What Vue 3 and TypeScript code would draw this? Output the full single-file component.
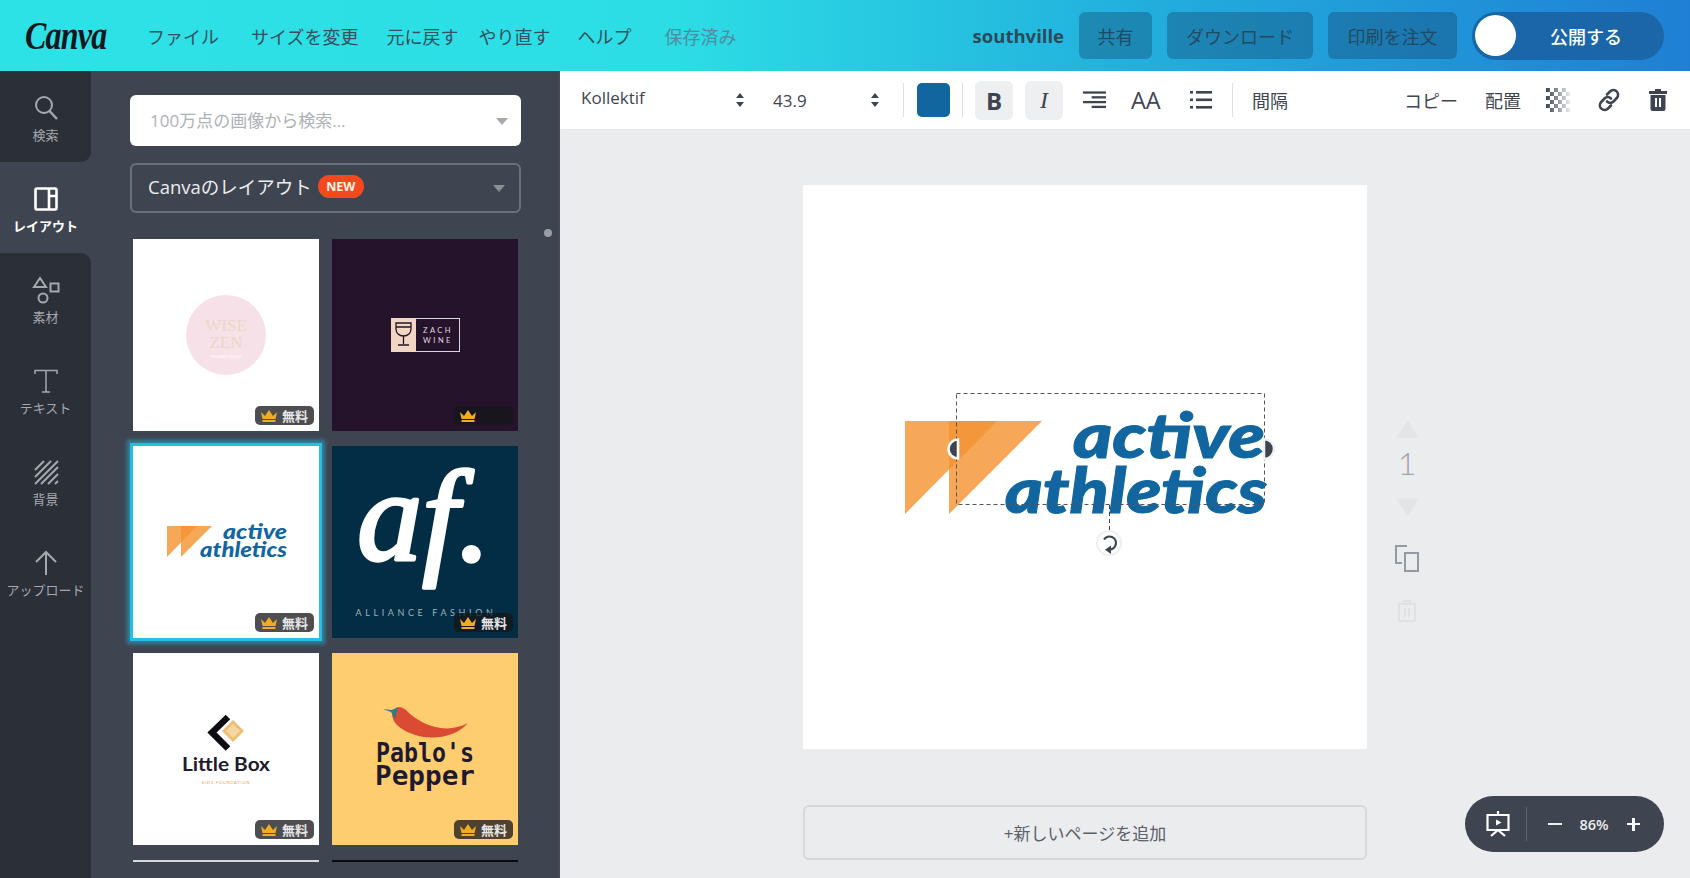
<script setup lang="ts">
const menu = ['ファイル', 'サイズを変更', '元に戻す', 'やり直す', 'ヘルプ']
const railTabs = [
  { id: 'search', label: '検索' },
  { id: 'layout', label: 'レイアウト' },
  { id: 'shapes', label: '素材' },
  { id: 'text', label: 'テキスト' },
  { id: 'bg', label: '背景' },
  { id: 'upload', label: 'アップロード' },
]
const thumbs = [
  { id: 'wise', label: true },
  { id: 'zach', label: false },
  { id: 'active', label: true },
  { id: 'af', label: true },
  { id: 'box', label: true },
  { id: 'pablo', label: true },
]
</script>

<template>
  <div class="app">
    <header class="topbar">
      <span class="logo">Canva</span>
      <nav class="menu">
        <span v-for="item in menu" :key="item" class="menu-item">{{ item }}</span>
        <span class="saved">保存済み</span>
      </nav>
      <div class="top-right">
        <span class="user">southville</span>
        <button class="top-btn share">共有</button>
        <button class="top-btn download">ダウンロード</button>
        <button class="top-btn print">印刷を注文</button>
        <button class="publish"><i class="knob"></i><span>公開する</span></button>
      </div>
    </header>

    <div class="body">
      <aside class="rail">
        <div
          v-for="tab in railTabs"
          :key="tab.id"
          class="rail-tab"
          :class="['tab-' + tab.id, { current: tab.id === 'layout' }]"
        >
          <svg class="rail-icon" viewBox="0 0 30 30" fill="none" stroke="currentColor" stroke-width="2">
            <template v-if="tab.id === 'search'">
              <circle cx="13" cy="12" r="8" />
              <path d="M18.500 18 26 26" stroke-width="2.500" />
            </template>
            <template v-else-if="tab.id === 'layout'">
              <rect x="4.500" y="4.500" width="21" height="21" rx="1.500" stroke-width="2.600" />
              <path d="M18 5v20M18 12h7" stroke-width="2.600" />
            </template>
            <template v-else-if="tab.id === 'shapes'">
              <path d="M9 3 15 12H3Z" />
              <rect x="19.500" y="8.500" width="8" height="8" />
              <circle cx="12" cy="23" r="4.500" />
            </template>
            <template v-else-if="tab.id === 'text'">
              <path d="M4 8V4.500h22V8M15 4.500V26M11 26h8" stroke-width="1.500" />
            </template>
            <template v-else-if="tab.id === 'bg'">
              <path d="M4 13 13 4M4 20 20 4M4 27 27 4M10 27 27 10M17 27 27 17M24 27l3-3" stroke-width="2" />
            </template>
            <template v-else>
              <path d="M15 27V5M5 14 15 4l10 10" />
            </template>
          </svg>
          <span class="rail-label">{{ tab.label }}</span>
        </div>
        <div class="rail-rest"></div>
      </aside>

      <section class="panel">
        <div class="search-box">
          <span>100万点の画像から検索...</span>
          <i class="caret"></i>
        </div>
        <div class="select-box">
          <span>Canvaのレイアウト</span>
          <b class="new">NEW</b>
          <i class="caret"></i>
        </div>
        <div class="grid">
          <div v-for="t in thumbs" :key="t.id" class="thumb" :class="'t-' + t.id">
            <svg class="art" viewBox="0 0 186 192">
              <template v-if="t.id === 'wise'">
                <circle cx="93" cy="96" r="40" fill="#f6e1e8" />
                <text x="93" y="92" class="serif" font-size="17" fill="#edd6c6">WISE</text>
                <text x="93" y="109" class="serif" font-size="17" fill="#edd6c6">ZEN</text>
                <text x="93" y="119" class="sans" font-size="3.500" fill="#fff">WELLNESS STUDIO</text>
              </template>
              <template v-else-if="t.id === 'zach'">
                <rect x="59.500" y="79.500" width="68" height="33" fill="#25132b" stroke="#d9d6d8" />
                <rect x="59" y="79" width="25" height="34" fill="#f1d6c3" />
                <g fill="none" stroke="#25132b" stroke-width="1.300">
                  <path d="M64 84h15v6c0 4-3 7-7.500 7S64 94 64 90ZM64 88h15M71.500 97v8M66 106h11" />
                </g>
                <text x="106" y="94" class="sans" font-size="7.500" letter-spacing="2.500" fill="#e3dde0">ZACH</text>
                <text x="106" y="104" class="sans" font-size="7.500" letter-spacing="2.500" fill="#e3dde0">WINE</text>
              </template>
              <template v-else-if="t.id === 'active'">
                <path d="M34 80h30L34 111Z" fill="#f6a858" />
                <path d="M48 80h31L48 111Z" fill="#f6a858" />
                <path d="M48 80h16L48 96.500Z" fill="#f4973a" />
                <text x="90" y="93" class="brand" font-size="21" textLength="64" lengthAdjust="spacingAndGlyphs">active</text>
                <text x="67" y="111" class="brand" font-size="21" textLength="87" lengthAdjust="spacingAndGlyphs">athletics</text>
              </template>
              <template v-else-if="t.id === 'af'">
                <text x="92" y="114" class="script" font-size="130" fill="#fff" stroke="#fff" stroke-width="3.500" stroke-linejoin="round">af.</text>
                <text x="94" y="170" class="sans" font-size="9" letter-spacing="3.600" fill="#9fb2bc">ALLIANCE FASHION</text>
              </template>
              <template v-else-if="t.id === 'box'">
                <path d="M95 64 79 79.500l16 16" fill="none" stroke="#0d0c12" stroke-width="6.500" />
                <path d="M100 67 111 78 100 89 89 78Z" fill="#eebe72" />
                <path d="M100 71 107 78 100 85 93 78Z" fill="#f4d7a2" />
                <text x="93" y="118" class="box-name" font-size="19" textLength="88" lengthAdjust="spacingAndGlyphs">Little Box</text>
                <text x="93" y="131" class="sans" font-size="4" letter-spacing=".8" fill="#e89b55">KIDS FOUNDATION</text>
              </template>
              <template v-else>
                <path d="M60 60C64 53 68 52 74 57C86 70 112 83 136 70C122 86 96 88 78 80C68 76 60 70 60 60Z" fill="#db4a32" />
                <path d="M51 56 60 57 66 54 63 66 59 59Z" fill="#2f7a8f" />
                <text x="93" y="109" class="pablo-name" font-size="26" textLength="98" lengthAdjust="spacingAndGlyphs">Pablo's</text>
                <text x="93" y="132" class="pablo-name" font-size="26" textLength="100" lengthAdjust="spacingAndGlyphs">Pepper</text>
              </template>
            </svg>
            <div class="badge">
              <svg class="crown" viewBox="0 0 18 14">
                <path d="M1 3 5 7 9 1l4 6 4-4-1.500 7h-13Z" fill="#f0ad21" />
                <rect x="2.500" y="11" width="13" height="2" fill="#f0ad21" />
              </svg>
              <span v-if="t.label">無料</span>
            </div>
          </div>
          <div class="next-row light"></div>
          <div class="next-row dark"></div>
        </div>
        <i class="scroll-dot"></i>
      </section>

      <main class="workspace">
        <div class="toolbar">
          <span class="font-name">Kollektif</span>
          <svg class="spin font-spin" viewBox="0 0 8 14"><path d="M4 0 8 5H0ZM4 14 0 9h8Z" /></svg>
          <span class="font-size">43.9</span>
          <svg class="spin size-spin" viewBox="0 0 8 14"><path d="M4 0 8 5H0ZM4 14 0 9h8Z" /></svg>
          <i class="sep sep-a"></i>
          <i class="swatch"></i>
          <i class="sep sep-b"></i>
          <span class="tool-toggle bold">B</span>
          <span class="tool-toggle italic">I</span>
          <svg class="tool-icon align" viewBox="0 0 24 20" fill="#3f4550">
            <rect x="0" y="1" width="24" height="2.400" />
            <rect x="9" y="6" width="15" height="2.400" />
            <rect x="0" y="11" width="24" height="2.400" />
            <rect x="9" y="16" width="15" height="2.400" />
          </svg>
          <span class="aa">AA</span>
          <svg class="tool-icon list" viewBox="0 0 22 20" fill="#3f4550">
            <rect x="0" y="1" width="3" height="2.600" />
            <rect x="6" y="1" width="16" height="2.600" />
            <rect x="0" y="8.500" width="3" height="2.600" />
            <rect x="6" y="8.500" width="16" height="2.600" />
            <rect x="0" y="16" width="3" height="2.600" />
            <rect x="6" y="16" width="16" height="2.600" />
          </svg>
          <i class="sep sep-c"></i>
          <span class="tool-text spacing">間隔</span>
          <div class="tool-right">
            <span class="tool-text">コピー</span>
            <span class="tool-text place">配置</span>
            <svg class="checker" viewBox="0 0 24 24">
              <defs>
                <linearGradient id="fade" x1="0" x2="1" y1="0" y2="0">
                  <stop offset="0" stop-color="#3f4550" />
                  <stop offset="1" stop-color="#3f4550" stop-opacity=".1" />
                </linearGradient>
              </defs>
              <path
                fill="url(#fade)"
                d="M0 0h4v4H0ZM8 0h4v4H8ZM16 0h4v4h-4ZM4 4h4v4H4ZM12 4h4v4h-4ZM20 4h4v4h-4ZM0 8h4v4H0ZM8 8h4v4H8ZM16 8h4v4h-4ZM4 12h4v4H4ZM12 12h4v4h-4ZM20 12h4v4h-4ZM0 16h4v4H0ZM8 16h4v4H8ZM16 16h4v4h-4ZM4 20h4v4H4ZM12 20h4v4h-4ZM20 20h4v4h-4Z"
              />
            </svg>
            <svg class="link" viewBox="0 0 24 24" fill="none" stroke="#3f4550" stroke-width="2.600" stroke-linecap="round">
              <path d="M10 6.500 13 3.500a4.600 4.600 0 0 1 6.800 6.500L16.500 13.500a4.600 4.600 0 0 1-6.500 0" />
              <path d="M14 17.500 11 20.500a4.600 4.600 0 0 1-6.800-6.500L7.500 10.500a4.600 4.600 0 0 1 6.500 0" />
            </svg>
            <svg class="trash" viewBox="0 0 18 22">
              <path fill="#3f4550" fill-rule="evenodd" d="M6 0h6v2h6v3H0V2h6ZM1.500 6h15v14a2 2 0 0 1-2 2h-11a2 2 0 0 1-2-2ZM6 9v9h2V9Zm4 0v9h2V9Z" />
            </svg>
          </div>
        </div>

        <div class="stage">
          <div class="canvas-row">
            <div class="canvas">
              <svg class="art" viewBox="0 0 564 564">
                <path d="M102 236h92l-92 93Z" fill="#f6a858" />
                <path d="M146 236h93l-93 93Z" fill="#f6a858" />
                <path d="M146 236h48l-48 49Z" fill="#f4973a" />
                <text x="270" y="273" class="brand" font-size="63" textLength="192" lengthAdjust="spacingAndGlyphs" stroke="#12669f" stroke-width="1">active</text>
                <text x="202" y="328" class="brand" font-size="63" textLength="262" lengthAdjust="spacingAndGlyphs" stroke="#12669f" stroke-width="1">athletics</text>
                <rect x="153.500" y="208.500" width="308" height="111" fill="none" stroke="#50555f" stroke-dasharray="4 3" />
                <path d="M155 254.500a9.500 9.500 0 0 0 0 19Z" fill="#3f4550" stroke="#fff" stroke-width="2.500" />
                <path d="M461 254a10 10 0 0 1 0 20Z" fill="#3f4550" stroke="#f1f2f3" stroke-width="2.500" />
                <path d="M306.500 320v28" stroke="#3f4550" stroke-dasharray="4 3" />
                <circle cx="306" cy="358" r="12" fill="#fff" stroke="#eeeff1" stroke-width="2" />
                <path d="M301 354.500a6.500 6.500 0 1 1 5 10" fill="none" stroke="#3f4550" stroke-width="2.200" />
                <path d="M308 360.500v8.500l-6-4.200Z" fill="#3f4550" />
              </svg>
            </div>
            <div class="page-tools">
              <svg class="tri" viewBox="0 0 24 18"><path d="M12 0 24 18H0Z" /></svg>
              <span class="page-num">1</span>
              <svg class="tri" viewBox="0 0 24 18"><path d="M0 0h24L12 18Z" /></svg>
              <svg class="dup" viewBox="0 0 24 27" fill="none" stroke="#959aa2" stroke-width="2">
                <path d="M12 1H1v17h6" />
                <rect x="10" y="8" width="13" height="18" />
              </svg>
              <svg class="bin" viewBox="0 0 18 22" fill="none" stroke="#dcdee1" stroke-width="1.500">
                <path d="M6 3V1h6v2M1 4h16v17H1ZM7 8v9M11 8v9" />
              </svg>
            </div>
          </div>
          <div class="add-page">+新しいページを追加</div>
        </div>

        <div class="zoom-pill">
          <svg class="present" viewBox="0 0 24 26" fill="none" stroke="#fff" stroke-width="2.200">
            <path d="M1.500 4h21v15h-21ZM12 0v4M12 19l-7 6M12 19l7 6" />
            <path d="M10 8.500 15.500 11.500 10 14.500Z" fill="#fff" stroke="none" />
          </svg>
          <i class="zoom-sep"></i>
          <span class="minus"></span>
          <span class="pct">86%</span>
          <span class="plus"></span>
        </div>
      </main>
    </div>
  </div>
</template>

<style scoped>
.app {
  display: flex;
  flex-direction: column;
  height: 878px;
  overflow: hidden;
  font-family: "Open Sans", "Noto Sans CJK JP", sans-serif;
  color: #3f4550;
}
.topbar {
  display: flex;
  align-items: center;
  height: 71px;
  flex: none;
  background: linear-gradient(90deg, #2de2e6 0%, #2cdde5 40%, #22aedd 68%, #1f7fd4 100%);
}
.logo {
  display: inline-block;
  margin-left: 25px;
  width: 122px;
  font: italic 700 40px "Liberation Serif", serif;
  letter-spacing: -1px;
  color: #14171c;
  transform: scaleX(0.8);
  transform-origin: left center;
}
.menu {
  display: flex;
  align-items: center;
  font-size: 18px;
  color: #37505c;
}
.menu-item:nth-child(2) {
  margin-left: 32px;
}
.menu-item:nth-child(3) {
  margin-left: 28px;
}
.menu-item:nth-child(4) {
  margin-left: 20px;
}
.menu-item:nth-child(5) {
  margin-left: 27px;
}
.saved {
  margin-left: 33px;
  color: #4f8d9e;
}
.top-right {
  display: flex;
  align-items: center;
  margin-left: auto;
  margin-right: 26px;
}
.user {
  font-size: 18.500px;
  font-weight: 700;
  color: #2b4a5a;
  margin-right: 15px;
}
.top-btn {
  height: 47px;
  border: 0;
  border-radius: 6px;
  padding: 0;
  font: inherit;
  font-size: 18px;
  color: #234a63;
  background: rgba(20, 60, 100, 0.35);
}
.share {
  width: 73px;
}
.download {
  width: 146px;
  margin-left: 15px;
}
.print {
  width: 129px;
  margin-left: 15px;
}
.publish {
  display: flex;
  align-items: center;
  width: 192px;
  height: 48px;
  margin-left: 15px;
  padding: 0 0 0 3px;
  border: 0;
  border-radius: 24px;
  background: #1a66a8;
  font: inherit;
  font-size: 18px;
  font-weight: 500;
  color: #fff;
}
.knob {
  width: 41px;
  height: 41px;
  border-radius: 50%;
  background: #fff;
}
.publish span {
  margin-left: 34px;
}
.body {
  display: flex;
  flex: 1;
  min-height: 0;
}
.rail {
  display: flex;
  flex-direction: column;
  width: 91px;
  flex: none;
  background: #3f4550;
}
.rail-tab {
  display: flex;
  flex-direction: column;
  align-items: center;
  gap: 4px;
  height: 91px;
  box-sizing: border-box;
  padding-top: 22px;
  background: #2a2f38;
  color: #a5a8ad;
}
.tab-search {
  border-bottom-right-radius: 10px;
}
.tab-shapes {
  border-top-right-radius: 10px;
}
.rail-tab.current {
  background: #3f4550;
  color: #fff;
}
.rail-icon {
  width: 30px;
  height: 30px;
}
.rail-label {
  font-size: 13px;
  line-height: 16px;
  white-space: nowrap;
}
.current .rail-label {
  font-weight: 600;
}
.rail-rest {
  flex: 1;
  background: #2a2f38;
}
.panel {
  position: relative;
  width: 469px;
  flex: none;
  box-sizing: border-box;
  padding: 24px 0 0 39px;
  background: #3f4550;
  overflow: hidden;
  border-right: 2px solid #444a55;
}
.search-box,
.select-box {
  position: relative;
  display: flex;
  align-items: center;
  box-sizing: border-box;
  width: 391px;
}
.search-box {
  height: 51px;
  padding: 0 0 2px 20px;
  border-radius: 6px;
  background: #fff;
  font-size: 17px;
  color: #aeb1b6;
}
.select-box {
  height: 50px;
  margin-top: 17px;
  padding: 0 0 4px 16px;
  border: 2px solid #6c7179;
  border-radius: 6px;
  font-size: 18.500px;
  color: #eceded;
}
.new {
  display: flex;
  align-items: center;
  justify-content: center;
  width: 46px;
  height: 23px;
  margin-left: 6px;
  border-radius: 12px;
  background: #f4491f;
  font-size: 12.500px;
  font-weight: 700;
  color: #fff4e6;
}
.caret {
  position: absolute;
  right: 13px;
  top: 50%;
  margin-top: -3px;
  border: 6.500px solid transparent;
  border-top: 7px solid #a5a8ad;
  border-bottom: 0;
}
.select-box .caret {
  right: 14px;
  border-top-color: #8a8e95;
}
.grid {
  display: grid;
  grid-template-columns: 186px 186px;
  grid-auto-rows: 192px;
  column-gap: 13px;
  row-gap: 15px;
  margin: 26px 0 0 3px;
}
.thumb {
  position: relative;
}
.art {
  display: block;
  width: 100%;
  height: 100%;
}
.t-wise,
.t-active,
.t-box {
  background: #fff;
}
.t-zach {
  background: #25132b;
}
.t-af {
  background: #032d45;
}
.t-pablo {
  background: #fecd70;
}
.t-active {
  box-shadow: 0 0 0 3px #26bde6, 0 0 4px 6px rgba(34, 180, 225, 0.55);
}
.next-row {
  height: 2px;
}
.next-row.light {
  background: #d4d6da;
}
.next-row.dark {
  background: #0c0c10;
}
.badge {
  position: absolute;
  right: 5px;
  bottom: 6px;
  display: flex;
  align-items: center;
  gap: 4px;
  box-sizing: border-box;
  width: 59px;
  height: 19px;
  padding-left: 5px;
  border-radius: 5px;
  background: rgba(22, 22, 26, 0.76);
  font-size: 13px;
  font-weight: 700;
  color: #e6e6e8;
}
.crown {
  width: 18px;
  height: 14px;
}
.scroll-dot {
  position: absolute;
  left: 453px;
  top: 158px;
  width: 8px;
  height: 8px;
  border-radius: 50%;
  background: #9a9da3;
}
.serif,
.sans,
.box-name,
.pablo-name,
.script {
  text-anchor: middle;
}
.serif {
  font-family: "Liberation Serif", serif;
}
.sans {
  font-family: "Lato", sans-serif;
}
.brand {
  font-family: "Lato", sans-serif;
  font-style: italic;
  font-weight: 900;
  fill: #12669f;
}
.script {
  font-family: "Liberation Serif", serif;
  font-style: italic;
  font-weight: 400;
}
.box-name {
  font-family: "Lato", sans-serif;
  font-weight: 700;
  fill: #1e1b2c;
}
.pablo-name {
  font-family: "DejaVu Sans Mono", monospace;
  font-weight: 700;
  fill: #1e1b2f;
}
.workspace {
  position: relative;
  display: flex;
  flex-direction: column;
  flex: 1;
  min-width: 0;
  background: #ebecee;
}
.toolbar {
  display: flex;
  align-items: center;
  flex: none;
  height: 59px;
  box-sizing: border-box;
  padding-left: 21px;
  background: #fff;
  border-bottom: 1px solid #e6e7e9;
  font-size: 17px;
}
.font-name {
  width: 155px;
  margin-top: -6px;
  font-family: "Open Sans", sans-serif;
  color: #3f4550;
}
.spin {
  width: 8px;
  height: 14px;
  fill: #3f4550;
}
.font-size {
  width: 98px;
  margin-left: 29px;
}
.sep {
  width: 1px;
  height: 34px;
  background: #dddfe2;
}
.sep-a {
  margin-left: 24px;
}
.swatch {
  width: 33px;
  height: 34px;
  margin-left: 13px;
  border-radius: 5px;
  background: #12669f;
}
.sep-b {
  margin-left: 12px;
}
.tool-toggle {
  display: flex;
  align-items: center;
  justify-content: center;
  width: 38px;
  height: 39px;
  border-radius: 6px;
  background: #eeeff1;
  font-size: 24px;
}
.bold {
  margin-left: 12px;
  font-weight: 700;
  font-family: "Open Sans", sans-serif;
}
.italic {
  margin-left: 12px;
  font-family: "Liberation Serif", serif;
  font-style: italic;
}
.tool-icon {
  flex: none;
}
.align {
  width: 23px;
  height: 20px;
  margin-left: 20px;
}
.aa {
  margin-left: 25px;
  width: 31px;
  font-size: 23.500px;
  white-space: nowrap;
}
.list {
  width: 22px;
  height: 20px;
  margin-left: 28px;
}
.sep-c {
  margin-left: 20px;
}
.tool-text {
  font-size: 18px;
}
.spacing {
  margin-left: 19px;
}
.tool-right {
  display: flex;
  align-items: center;
  margin-left: auto;
  margin-right: 23px;
}
.place {
  margin-left: 27px;
}
.checker {
  width: 24px;
  height: 24px;
  margin-left: 25px;
}
.link {
  width: 24px;
  height: 24px;
  margin-left: 27px;
}
.trash {
  width: 18px;
  height: 22px;
  margin-left: 28px;
}
.stage {
  padding: 55px 0 0 243px;
}
.canvas-row {
  display: flex;
}
.canvas {
  width: 564px;
  height: 564px;
  background: #fff;
}
.page-tools {
  display: flex;
  flex-direction: column;
  align-items: center;
  width: 28px;
  margin-left: 26px;
  padding-top: 235px;
}
.tri {
  width: 23px;
  height: 18px;
  fill: #e2e4e6;
}
.page-num {
  margin: 1px 0 12px;
  font: 300 32px/47px "Lato", sans-serif;
  color: #a0a5ac;
}
.dup {
  width: 24px;
  height: 27px;
  margin-top: 29px;
}
.bin {
  width: 18px;
  height: 22px;
  margin-top: 28px;
}
.add-page {
  display: flex;
  align-items: center;
  justify-content: center;
  box-sizing: border-box;
  width: 564px;
  height: 55px;
  margin-top: 56px;
  border: 2px solid #d6d8db;
  border-radius: 6px;
  font-size: 17px;
  color: #5b6069;
}
.zoom-pill {
  position: absolute;
  left: 905px;
  top: 725px;
  display: flex;
  align-items: center;
  width: 199px;
  height: 56px;
  border-radius: 28px;
  background: #3f4550;
  color: #eceded;
}
.present {
  width: 24px;
  height: 26px;
  margin-left: 21px;
}
.zoom-sep {
  width: 1px;
  height: 34px;
  margin-left: 16px;
  background: #5f646d;
}
.minus {
  width: 14px;
  height: 2px;
  margin-left: 21px;
  background: #eceded;
}
.pct {
  width: 50px;
  margin-left: 7px;
  text-align: center;
  font-size: 14.500px;
  font-weight: 600;
}
.plus {
  position: relative;
  width: 13px;
  height: 2.500px;
  margin-left: 8px;
  background: #fff;
}
.plus::after {
  content: "";
  position: absolute;
  left: 5.250px;
  top: -5.250px;
  width: 2.500px;
  height: 13px;
  background: #fff;
}
</style>

<style>
html,
body {
  margin: 0;
  overflow: hidden;
}
</style>
